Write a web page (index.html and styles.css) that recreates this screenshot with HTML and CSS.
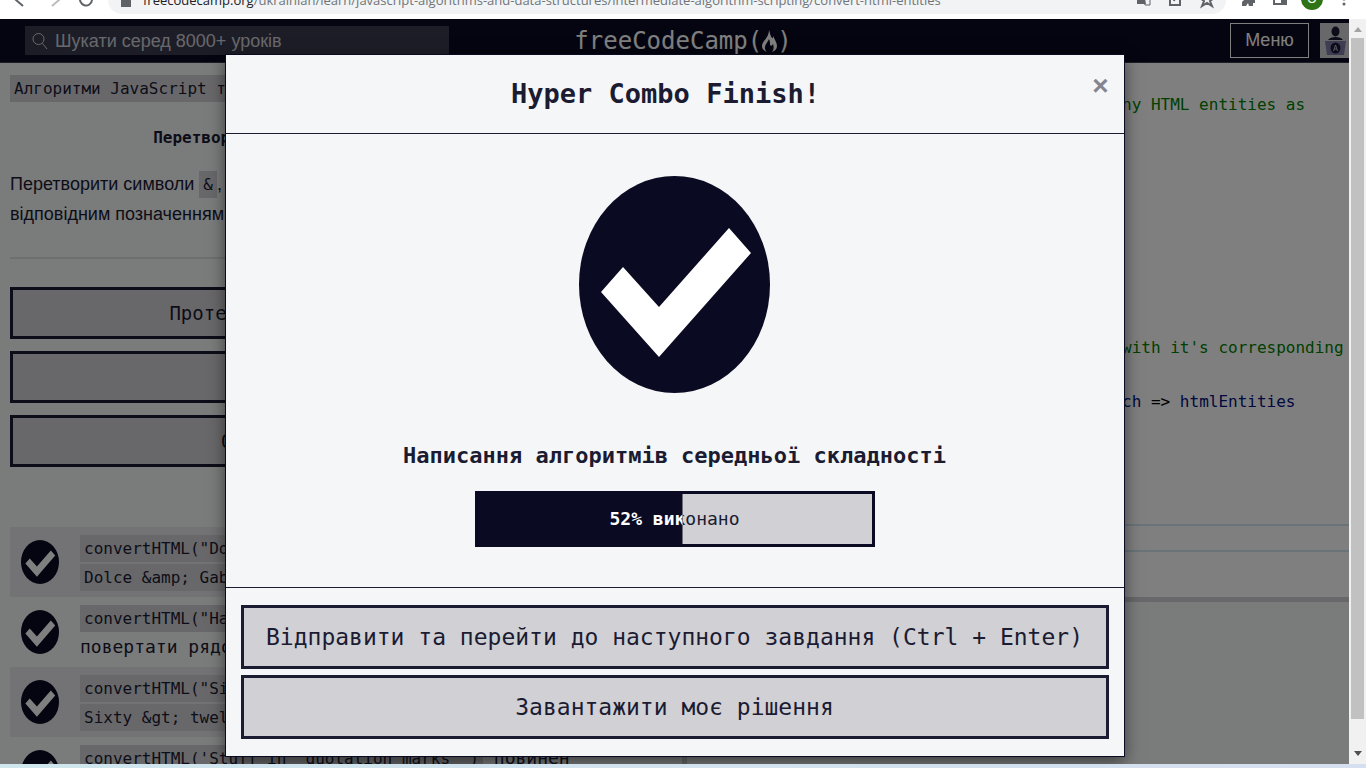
FILE: index.html
```html
<!DOCTYPE html>
<html lang="uk">
<head>
<meta charset="utf-8">
<title>freeCodeCamp</title>
<link rel="stylesheet" href="styles.css">
</head>
<body>
<svg class="defs" aria-hidden="true">
  <symbol id="pass" viewBox="0 0 191 217" preserveAspectRatio="none">
    <ellipse cx="95.500" cy="108.500" rx="95.500" ry="108.500" fill="#0a0a23"/>
    <path d="M22 116 44 91 80 131 150 52 172 77 80 181Z" fill="#fff"/>
  </symbol>
</svg>

<div class="browser-bar">
  <svg class="nav-icons" viewBox="0 0 100 28" fill="none" stroke="#5f6368" stroke-width="2">
    <path d="M23 7 16 14 23 20"/><path d="M52 7 59 14 52 20" stroke="#babcbe"/><path d="M92 14a6 6 0 1 1-2-5"/>
  </svg>
  <div class="address">
    <svg class="lock" viewBox="0 0 10 14" fill="#5f6368"><path d="M0 5h10v9H0zM2 5V2q3-4 6 0v3H7V3Q5 0 3 3v2z"/></svg>
    <span class="url"><b>freecodecamp.org</b>/ukrainian/learn/javascript-algorithms-and-data-structures/intermediate-algorithm-scripting/convert-html-entities</span>
    <svg class="address-icons" viewBox="0 0 80 28" fill="none" stroke="#5f6368" stroke-width="2">
      <path d="M1 7h7l2 11H1z" fill="#5f6368" stroke="none"/><path d="M6 11h8v8H9z" stroke-width="1"/>
      <path d="M38 9h-4v10h10v-5M38 15q1-5 6-5"/><path d="M71 6l2 6h5l-4 3 2 5-5-3-5 3 2-5-4-3h5z"/>
    </svg>
  </div>
  <svg class="tool-icons" viewBox="0 0 120 28">
    <path d="M2 9h3V6h4v3h4v4h2v4h-2v3H9l-1-3-2 3H2v-4l2-2-2-1z" fill="#5f6368"/>
    <path d="M34 9h12v9H34z" fill="none" stroke="#5f6368" stroke-width="2"/><path d="M41 9h5v9h-5z" fill="#5f6368"/>
    <circle cx="72" cy="13" r="11" fill="#2e7416"/><text x="72" y="17" text-anchor="middle" class="profile-letter">O</text>
    <g fill="#5f6368"><circle cx="104" cy="13" r="1.500"/><circle cx="104" cy="18" r="1.500"/></g>
  </svg>
</div>

<div class="window">
  <div class="page">
    <header class="site-nav">
      <label class="search">
        <svg viewBox="0 0 16 18" fill="none" stroke="#d0d0d5"><circle cx="6.500" cy="7" r="5.500"/><path d="M10.500 11.500 15 17"/></svg>
        <input type="search" placeholder="Шукати серед 8000+ уроків" aria-label="Пошук">
      </label>
      <a class="logo" href="#">freeCodeCamp(<svg viewBox="0 0 15 24" fill="#fff"><path d="M7 1c1 3 1 5 3 8 1 1 1-1 1-2 2 4 4 7 4 10 0 3-2 5-5 6 2-3 2-5 1-8-1 2-2 2-3 1 0-2 0-4-1-6-1 3-4 5-4 9 0 2 1 3 2 4-3-1-5-3-5-6C0 12 7 9 7 1z"/></svg>)</a>
      <div class="nav-end">
        <button class="menu" type="button">Меню</button>
        <svg class="avatar" viewBox="0 0 29 35"><path fill="#d0d0d5" d="M0 0h29v35H0z"/><ellipse cx="15.500" cy="8.500" rx="4" ry="5" fill="#1b1b32"/><path d="M8 17q2-3 7.500-3t7.500 3z" fill="#1b1b32"/><path d="M5 18h21l-2 14H7z" fill="#7b7ba8"/><ellipse cx="15.500" cy="25" rx="5" ry="5.500" fill="#1b1b32"/><path d="M13.500 28l2-6 2 6M14 26h3" stroke="#aaaacb" fill="none"/></svg>
      </div>
    </header>

    <main class="workspace">
      <section class="lesson">
        <div><code>Алгоритми JavaScript та структури даних</code></div>
        <h1>Перетворення спеціальних HTML-сутностей</h1>
        <p>Перетворити символи <code>&amp;</code>, <code>&lt;</code>, <code>&gt;</code> у рядку<br>відповідним позначенням HTML.</p>
        <hr>
        <div class="actions">
          <button type="button">Протестуйте код (Ctrl + Enter)</button>
          <button type="button">Скинути код</button>
          <button type="button">Отримати всю допомогу</button>
        </div>
        <ul class="tests">
          <li><svg><use href="#pass"/></svg><div><code>convertHTML("Dolce &amp; Gabbana")</code> повинен<br><code>Dolce &amp;amp; Gabbana</code></div></li>
          <li><svg><use href="#pass"/></svg><div><code>convertHTML("Hamburgers")</code> повинен<br>повертати рядок</div></li>
          <li><svg><use href="#pass"/></svg><div><code>convertHTML("Sixty &gt; twelve")</code> повинен<br><code>Sixty &amp;gt; twelve</code></div></li>
          <li><svg><use href="#pass"/></svg><div><code>convertHTML('Stuff in "quotation marks"')</code> повинен<br>повертати рядок</div></li>
        </ul>
      </section>
      <div class="split-v"></div>
      <section class="output">
        <pre class="editor"><span class="comment">  // Use object lookup to define as many HTML entities as</span>
needed.
  const htmlEntities = {
    "&amp;": "&amp;amp;",
    "&lt;": "&amp;lt;",
    "&gt;": "&amp;gt;",
    '"': "&amp;quot;",
    "'": "&amp;apos;"
  };
<span class="comment">  // Using a regex replace characters with it's corresponding</span>
html entity
  return str.replace(/([&amp;&lt;&gt;"'])/g, <span class="name">match</span> =&gt; <span class="name">htmlEntities</span>
[match]);
}
</pre>
        <div class="current-line"></div>
        <div class="split-h"></div>
        <div class="console"></div>
      </section>
    </main>

    <div class="backdrop">
      <div class="modal" role="dialog" aria-labelledby="modal-title">
        <header>
          <h2 id="modal-title">Hyper Combo Finish!</h2>
          <button class="close" type="button" aria-label="Закрити">×</button>
        </header>
        <div class="modal-body">
          <svg class="big-check"><use href="#pass"/></svg>
          <h3>Написання алгоритмів середньої складності</h3>
          <div class="progress" role="progressbar" aria-valuenow="52" aria-valuemin="0" aria-valuemax="100">
            <span>52% виконано</span>
            <span class="progress-fill" style="clip-path: inset(0 48% 0 0)" aria-hidden="true">52% виконано</span>
          </div>
        </div>
        <footer>
          <button type="button">Відправити та перейти до наступного завдання (Ctrl + Enter)</button>
          <button type="button">Завантажити моє рішення</button>
        </footer>
      </div>
    </div>
  </div>
  <div class="scrollbar" aria-hidden="true">
    <svg viewBox="0 0 17 19"><path d="M5 13h8L9 8z" fill="#a3a3a3"/></svg>
    <div class="thumb"></div>
    <svg viewBox="0 0 17 19"><path d="M5 6h8l-4 5z" fill="#505050"/></svg>
  </div>
</div>
<div class="taskbar"></div>
</body>
</html>
```

FILE: styles.css
```css
* { box-sizing: border-box; }

:root {
  --mono: "DejaVu Sans Mono", monospace;
  --sans: "Liberation Sans", Arial, sans-serif;
  --ink: #1b1b32;
  --navy: #0a0a23;
  --panel: #f5f6f7;
  --grey: #d0d0d5;
}

body {
  display: flex;
  flex-direction: column;
  height: 100vh;
  margin: 0;
  overflow: hidden;
  color: var(--ink);
  font-family: var(--mono);
}

button { color: var(--ink); font-family: var(--mono); }
.defs { display: none; }

/* Browser frame */
.browser-bar {
  display: flex;
  align-items: flex-end;
  flex: none;
  height: 19px;
  padding-bottom: 5px;
  overflow: hidden;
  background: #fff;
}
.browser-bar svg { flex: none; }
.nav-icons { width: 100px; height: 28px; }
.address {
  display: flex;
  align-items: center;
  flex: 1;
  min-width: 0;
  height: 28px;
  margin-left: 8px;
  padding: 0 10px 0 13px;
  border-radius: 14px;
  background: #f1f3f4;
}
.lock { width: 10px; height: 14px; margin-right: 12px; }
.url {
  flex: 1;
  overflow: hidden;
  color: #70757a;
  font: 13px/28px "Open Sans", sans-serif;
  white-space: nowrap;
}
.url b { color: #202124; font-weight: 400; }
.address-icons { width: 80px; height: 28px; }
.tool-icons { width: 120px; height: 28px; margin: 0 6px 0 14px; }
.profile-letter { fill: #fff; font: 12px var(--sans); }

.window { display: flex; flex: 1; min-height: 0; }
.taskbar {
  flex: none;
  height: 4px;
  background: linear-gradient(90deg, #cfe6ed, #d5dff0);
}
.scrollbar {
  display: flex;
  flex-direction: column;
  width: 17px;
  background: #f1f1f1;
}
.scrollbar svg { flex: none; width: 17px; height: 19px; }
.thumb { flex: 1; margin: 0 2px 26px; background: #c1c1c1; }

/* Site */
.page {
  position: relative;
  display: flex;
  flex: 1;
  flex-direction: column;
  min-width: 0;
  overflow: hidden;
  background: var(--panel);
}
.site-nav {
  display: grid;
  grid-template-columns: 1fr auto 1fr;
  align-items: center;
  flex: none;
  height: 44px;
  padding-left: 17px;
  border-bottom: 1px solid #3b3b4f;
  background: var(--navy);
}
.search {
  display: flex;
  align-items: center;
  gap: 7px;
  width: 76%;
  height: 29px;
  margin-left: 8px;
  padding-left: 7px;
  background: #3b3b4f;
}
.search svg { width: 16px; height: 18px; }
.search input {
  flex: 1;
  min-width: 0;
  padding: 2px 0 0;
  border: 0;
  outline: 0;
  background: none;
  color: var(--grey);
  font: 18px var(--sans);
}
.search input::placeholder { color: var(--grey); }
.logo {
  display: flex;
  align-items: center;
  color: #fff;
  font-size: 24px;
  line-height: 28px;
  text-decoration: none;
}
.logo svg { width: 15px; height: 24px; }
.nav-end { display: flex; align-items: center; justify-content: flex-end; gap: 11px; }
.menu {
  width: 79px;
  height: 35px;
  padding: 0;
  border: 1px solid #fff;
  background: var(--navy);
  color: #fff;
  font: 18px var(--sans);
}
.avatar { width: 29px; height: 35px; }

.workspace { display: flex; flex: 1; min-height: 0; }
.lesson {
  flex: 1;
  min-width: 0;
  padding: 10px 10px 0;
  overflow: hidden;
  font-size: 18px;
  line-height: 29px;
}
.lesson code {
  padding: 4px;
  background: var(--grey);
  font: 16px var(--mono);
}
.lesson h1 {
  margin: 21px 0 16px;
  font-size: 16px;
  line-height: 30px;
  text-align: center;
}
.lesson p { margin: 0; font-family: var(--sans); font-size: 18px; line-height: 30px; }
.lesson hr { margin: 28px 0; border: 0; border-top: 2px solid #dfdfe2; }
.actions { display: grid; gap: 12px; }
.actions button {
  height: 52px;
  border: 3px solid var(--ink);
  background: var(--grey);
  font-size: 19px;
}
.tests { margin: 60px 0 0; padding: 0; list-style: none; }
.tests li {
  display: flex;
  align-items: center;
  gap: 21px;
  height: 70px;
  padding-left: 11px;
  white-space: nowrap;
}
.tests li:nth-child(odd) { background: #e7e7ea; }
.tests svg { flex: none; width: 38px; height: 44px; }

.split-v { width: 5px; background: var(--grey); }
.output {
  display: flex;
  flex: 1;
  flex-direction: column;
  min-width: 0;
  background: #fff;
}
.editor {
  height: 461px;
  margin: 0;
  padding: 28px 0 0 69px;
  overflow: hidden;
  color: #000;
  font: 16px/27px var(--mono);
}
.comment { color: #008000; }
.name { color: #001080; }
.current-line { height: 28px; border: solid #d3e6f0; border-width: 2px 0; }
.split-h { height: 5px; margin-top: 45px; background: var(--grey); }
.console { flex: 1; background: var(--panel); }

/* Completion dialog */
.backdrop {
  position: absolute;
  inset: 0;
  padding: 35px 20px 0;
  background: rgba(0, 0, 0, 0.5);
}
.modal {
  max-width: 900px;
  margin: 0 auto;
  border: 1px solid var(--navy);
  background: var(--panel);
  box-shadow: 0 5px 15px rgba(0, 0, 0, 0.5);
}
.modal header {
  position: relative;
  padding: 20px 50px 20px 32px;
  border-bottom: 1px solid var(--ink);
}
.modal h2 {
  margin: 0;
  font-size: 27px;
  line-height: 38px;
  text-align: center;
}
.close {
  position: absolute;
  top: 16px;
  right: 15px;
  padding: 0;
  border: 0;
  background: none;
  color: #858591;
  font: bold 28px/30px var(--sans);
}
.modal-body {
  display: flex;
  flex-direction: column;
  align-items: center;
  padding: 42px 15px 40px;
  border-bottom: 1px solid var(--ink);
}
.big-check { width: 191px; height: 217px; }
.modal h3 {
  margin: 48px 0 20px;
  font-size: 22px;
  line-height: 30px;
}
.progress {
  position: relative;
  width: 400px;
  border: 3px solid var(--navy);
  background: var(--grey);
  font-size: 18px;
  line-height: 50px;
  text-align: center;
}
.progress-fill {
  position: absolute;
  inset: -3px;
  padding: 3px;
  background: var(--navy);
  color: #fff;
  font-weight: 700;
}
.modal footer { display: grid; gap: 6px; padding: 17px 15px; }
.modal footer button {
  height: 64px;
  border: 3px solid var(--ink);
  background: var(--grey);
  font-size: 23px;
}
```
